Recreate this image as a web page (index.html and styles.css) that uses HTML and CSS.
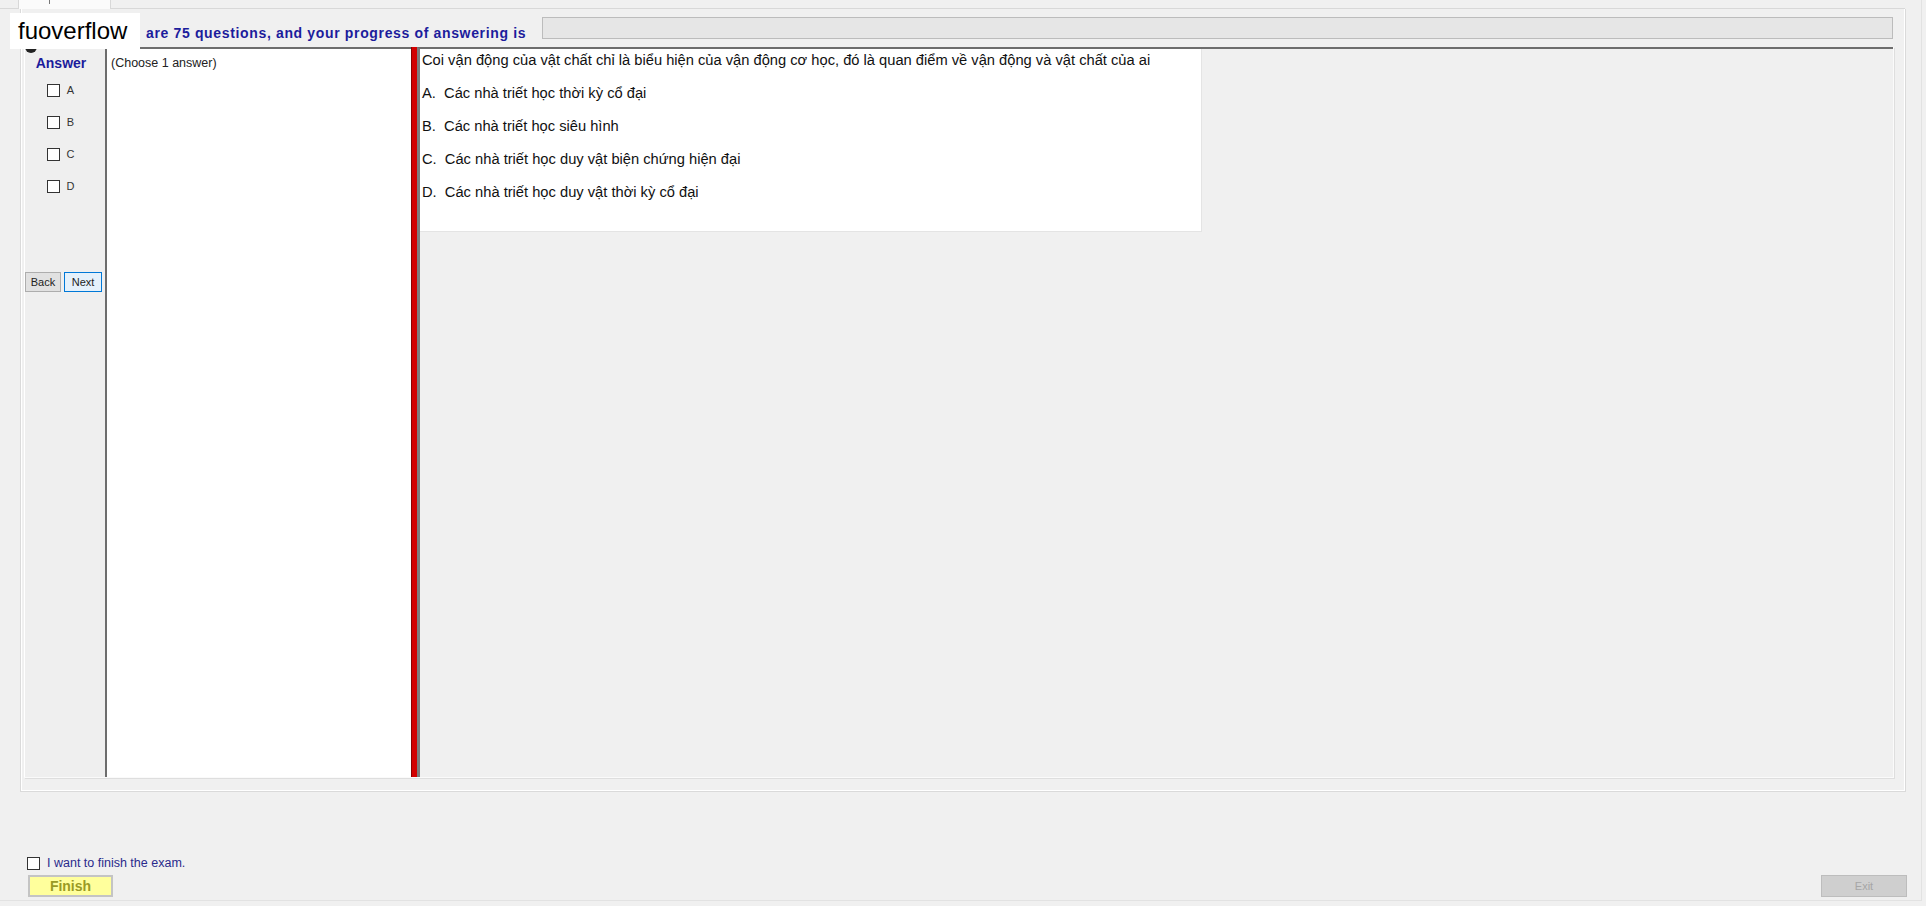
FILE: index.html
```html
<!DOCTYPE html>
<html lang="vi">
<head>
<meta charset="UTF-8">
<title>Exam</title>
<link rel="stylesheet" href="styles.css">
</head>
<body>

<div class="window">
  <!-- tab strip -->
  <div class="tabstrip">
    <div class="tab"><span class="tab-mark"></span></div>
  </div>

  <!-- tab page -->
  <div class="frame">
    <div class="header">
      <span class="dot"></span>
      <div class="brand">fuoverflow</div>
      <div class="header-text">are 75 questions, and your progress of answering is</div>
      <div class="progress"></div>
    </div>

    <div class="main">
      <!-- answer column -->
      <div class="answers">
        <div class="answers-title">Answer</div>
        <label class="opt"><span class="box"></span>A</label>
        <label class="opt"><span class="box"></span>B</label>
        <label class="opt"><span class="box"></span>C</label>
        <label class="opt"><span class="box"></span>D</label>
        <div class="nav">
          <button class="btn">Back</button>
          <button class="btn btn-focus">Next</button>
        </div>
      </div>

      <!-- question list -->
      <div class="qlist">(Choose 1 answer)</div>
      <div class="redbar"></div>

      <!-- question -->
      <div class="content">
        <div class="question">
          <p class="q-line">Coi vận động của vật chất chỉ là biểu hiện của vận động cơ học, đó là quan điểm về vận động và vật chất của ai</p>
          <p class="q-line">A.&nbsp; Các nhà triết học thời kỳ cổ đại</p>
          <p class="q-line">B.&nbsp; Các nhà triết học siêu hình</p>
          <p class="q-line">C.&nbsp; Các nhà triết học duy vật biện chứng hiện đại</p>
          <p class="q-line">D.&nbsp; Các nhà triết học duy vật thời kỳ cổ đại</p>
        </div>
      </div>
    </div>
  </div>

  <!-- footer -->
  <div class="footer">
    <div class="finish-group">
      <label class="finish-check"><span class="box"></span>I want to finish the exam.</label>
      <button class="finish">Finish</button>
    </div>
    <button class="exit" disabled>Exit</button>
  </div>
</div>

</body>
</html>
```

FILE: styles.css
```css
/* base */
body {
  margin: 0;
  background: #f0f0f0;
  font-family: "Liberation Sans", Arial, sans-serif;
  color: #222;
}

.window {
  width: 1921px;
  height: 900px;
  border-right: 1px solid #e2e2e2;
  border-bottom: 1px solid #e2e2e2;
}

/* tab strip */
.tabstrip {
  height: 8px;
  border-bottom: 1px solid #d8d8d8;
  margin-right: 16px;
  position: relative;
}

.tab {
  margin-left: 18px;
  width: 91px;
  height: 9px;
  background: #fbfbfb;
  border-left: 1px solid #d8d8d8;
  border-right: 1px solid #d8d8d8;
  position: relative;
}

.tab-mark {
  position: absolute;
  left: 30px;
  top: 0;
  width: 1px;
  height: 4px;
  background: #777;
}

/* tab page */
.frame {
  margin-left: 20px;
  width: 1884px;
  height: 782px;
  border: 1px solid #dadada;
  border-top: none;
  box-shadow: inset 1px 0 #fff, inset -1px -1px #fff;
}

.header {
  position: relative;
  display: flex;
  align-items: flex-start;
  height: 38px;
  padding-left: 125px;
}

.dot {
  position: absolute;
  left: 4px;
  top: 32px;
  width: 12px;
  height: 12px;
  border-radius: 50%;
  background: #222;
}

.brand {
  position: absolute;
  left: -11px;
  top: 4px;
  width: 130px;
  height: 36px;
  background: #fff;
  color: #000;
  font-size: 24px;
  line-height: 36px;
  padding-left: 8px;
  box-sizing: border-box;
}

.header-text {
  margin-top: 16px;
  font-size: 14px;
  font-weight: bold;
  letter-spacing: 0.65px;
  color: #1c1c9c;
  white-space: nowrap;
}

.progress {
  flex: 1;
  margin: 8px 12px 0 16px;
  height: 20px;
  background: #e6e6e6;
  border: 1px solid #bcbcbc;
}

/* main panel */
.main {
  display: flex;
  margin-left: 3px;
  width: 1869px;
  height: 730px;
  border-right: 1px solid #fafafa;
  border-bottom: 1px solid #fafafa;
  box-shadow: 1px 1px #dedede;
}

.answers {
  width: 80px;
  background: #efefef;
  display: flex;
  flex-direction: column;
  align-items: center;
  border-left: 1px solid #fff;
}

.answers-title {
  margin-top: 8px;
  font-size: 14px;
  font-weight: bold;
  color: #1c1c9c;
  margin-right: 8px;
}

.opt {
  display: flex;
  align-items: flex-start;
  gap: 7px;
  font-size: 11px;
  color: #333;
  line-height: 12px;
  height: 32px;
  margin-right: 9px;
}

.answers-title + .opt {
  margin-top: 13px;
}

.box {
  display: inline-block;
  width: 11px;
  height: 11px;
  border: 1px solid #333;
  background: #fff;
}

.nav {
  margin-top: 60px;
  margin-right: 3px;
  display: flex;
  gap: 3px;
}

.btn {
  width: 36px;
  height: 20px;
  padding: 0;
  font-family: "Liberation Sans", Arial, sans-serif;
  font-size: 11px;
  color: #222;
  background: #e1e1e1;
  border: 1px solid #adadad;
}

.btn-focus {
  width: 38px;
  background: #e5f1fb;
  border-color: #0078d7;
}

.qlist {
  width: 306px;
  background: #fff;
  border-left: 2px solid #6d6d6d;
  border-top: 2px solid #6d6d6d;
  font-size: 12.5px;
  padding: 7px 0 0 4px;
  box-sizing: border-box;
}

.redbar {
  width: 6px;
  background: #d20000;
  border-left: 1px solid #8a0000;
  box-sizing: border-box;
}

.content {
  flex: 1;
  border-left: 3px solid #7c7c7c;
  border-top: 2px solid #6d6d6d;
  background: #f0f0f0;
}

.question {
  width: 782px;
  height: 183px;
  background: #fff;
  border-right: 1px solid #e4e4e4;
  border-bottom: 1px solid #e4e4e4;
  padding: 1px 0 0 2px;
  box-sizing: border-box;
}

.q-line {
  margin: 0 0 13px 0;
  font-size: 14.7px;
  line-height: 20px;
  color: #111;
  white-space: nowrap;
}

/* footer */
.footer {
  display: flex;
  justify-content: space-between;
  align-items: flex-end;
  padding: 64px 14px 0 27px;
}

.finish-check {
  display: flex;
  align-items: center;
  gap: 7px;
  font-size: 12.5px;
  color: #2a2a8c;
  height: 14px;
}

.finish {
  margin-top: 5px;
  margin-left: 1px;
  width: 85px;
  height: 22px;
  padding: 0;
  background: #ffff9c;
  border: 2px solid #c4c4c4;
  font-family: "Liberation Sans", Arial, sans-serif;
  font-size: 14px;
  font-weight: bold;
  color: #9a9a24;
}

.exit {
  width: 86px;
  height: 22px;
  padding: 0;
  background: #cfcfcf;
  border: 1px solid #bdbdbd;
  font-family: "Liberation Sans", Arial, sans-serif;
  font-size: 11px;
  color: #a6a6a6;
}
```
